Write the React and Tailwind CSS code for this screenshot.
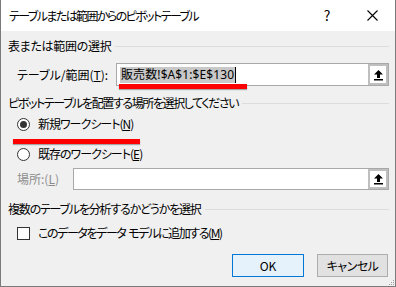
import React from 'react'

const font = "font-['Meiryo_UI','Noto_Sans_CJK_JP',sans-serif] [font-feature-settings:'palt']"

function Heading({ children, className = '' }) {
  return (
    <div className="flex items-center h-[18px] gap-[4px]">
      <span className={`whitespace-nowrap ${className}`}>{children}</span>
      <div className="flex-1 h-px bg-[#dcdcdc]" />
    </div>
  )
}

function PickButton() {
  return (
    <div className="w-[20px] h-full border-2 border-[#bfbfbf] bg-white flex items-center justify-center">
      <svg width="11" height="12" viewBox="0 0 11 12">
        <path d="M5.5 1 L10 5.5 H7 V9 H4 V5.5 H1 Z" fill="#000" />
        <rect x="1" y="10" width="9" height="1.5" fill="#000" />
      </svg>
    </div>
  )
}

function Radio({ checked }) {
  return (
    <div className="w-[13px] h-[13px] rounded-full border border-[#333] bg-white flex items-center justify-center">
      {checked && <div className="w-[7px] h-[7px] rounded-full bg-[#333]" />}
    </div>
  )
}

export default function App() {
  return (
    <div className={`relative w-[396px] h-[287px] bg-[#f0f0f0] border-x border-b border-[#7a7a7a] text-[12px] text-black tracking-[-1px] ${font}`}>
      {/* title bar */}
      <div className="h-[31px] bg-white flex items-center pl-[8px]">
        <span className="flex-1 tracking-[-1.6px]">テーブルまたは範囲からのピボットテーブル</span>
        <span className="w-[20px] text-[14px] text-center mr-[30px] tracking-normal">?</span>
        <svg width="11" height="11" viewBox="0 0 11 11" className="mr-[17px]">
          <path d="M0.5 0.5 L10.5 10.5 M10.5 0.5 L0.5 10.5" stroke="#000" strokeWidth="1.1" />
        </svg>
      </div>

      <div className="pl-[7px] pr-[6px]">
        <div className="mt-[6px]">
          <Heading className="tracking-[-0.3px]">表または範囲の選択</Heading>
        </div>

        <div className="mt-[8px] flex items-center h-[23px]">
          <span className="w-[108px] pl-[9px] whitespace-nowrap tracking-normal">テーブル/範囲(<span className="underline">T</span>):</span>
          <div className="flex-1 h-full border border-[#a8a8a8] bg-white flex items-center">
            <span className="ml-[3px] bg-[#c8c8c8] px-[1px] leading-[16px] tracking-[0.1px] font-['Noto_Sans','Noto_Sans_CJK_JP',sans-serif]">販売数!$A$1:$E$130</span>
            <span className="w-px h-[16px] bg-black" />
            <div className="flex-1" />
            <PickButton />
          </div>
        </div>

        <div className="mt-[8px]">
          <Heading className="tracking-[-1.4px]">ピボットテーブルを配置する場所を選択してください</Heading>
        </div>

        <div className="mt-[3px] h-[18px] flex items-center pl-[9px] gap-[8px]">
          <Radio checked />
          <span>新規ワークシート(<span className="underline">N</span>)</span>
        </div>

        <div className="mt-[12px] h-[18px] flex items-center pl-[9px] gap-[8px]">
          <Radio />
          <span>既存のワークシート(<span className="underline">E</span>)</span>
        </div>

        <div className="mt-[5px] flex items-center h-[22px]">
          <span className="w-[65px] pl-[9px] text-[#8c8c8c] whitespace-nowrap tracking-normal">場所:(<span className="underline">L</span>)</span>
          <div className="flex-1 h-full border border-[#a8a8a8] bg-white flex items-center justify-end">
            <PickButton />
          </div>
        </div>

        <div className="mt-[10px]">
          <Heading className="tracking-[-1.2px]">複数のテーブルを分析するかどうかを選択</Heading>
        </div>

        <div className="mt-[6px] h-[18px] flex items-center pl-[9px] gap-[8px]">
          <div className="w-[13px] h-[13px] border border-[#333] bg-white" />
          <span className="tracking-[-1.4px]">このデータをデータ<span className="tracking-normal"> </span>モデルに追加する(<span className="underline">M</span>)</span>
        </div>

        <div className="mt-[12px] flex justify-end gap-[13px] pr-[1px] tracking-normal">
          <button className="w-[72px] h-[23px] bg-[#e5f1fb] border border-[#0078d7]">OK</button>
          <button className="w-[71px] h-[23px] bg-[#e1e1e1] border border-[#adadad] tracking-[-0.5px]">キャンセル</button>
        </div>
      </div>

      {/* annotation underlines */}
      <div className="absolute left-[118px] top-[84px] w-[128px] h-[5px] bg-[#ff0000] shadow-[0_1px_1px_rgba(0,0,0,0.3)]" />
      <div className="absolute left-[12px] top-[139px] w-[127px] h-[5px] bg-[#ff0000] shadow-[0_1px_1px_rgba(0,0,0,0.3)]" />

      {/* size grip */}
      <div className="absolute right-[1px] bottom-[1px] grid grid-cols-3 gap-[1px]">
        {[0, 1, 2, 3, 4, 5, 6, 7, 8].map((i) => (
          <div key={i} className={`w-[1px] h-[1px] ${i === 0 || i === 1 || i === 3 ? 'bg-transparent' : 'bg-[#a0a0a0]'}`} />
        ))}
      </div>
    </div>
  )
}
